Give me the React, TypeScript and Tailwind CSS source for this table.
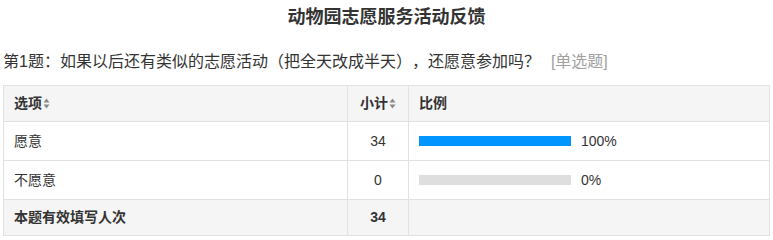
import React from "react";

const font = { fontFamily: '"Liberation Sans", Arial, "Noto Sans CJK SC", sans-serif' };

function SortIcon() {
  return (
    <svg width="7" height="11" viewBox="0 0 7 11" className="ml-[1px] inline-block">
      <polygon points="3.5,0.5 6.5,4.5 0.5,4.5" fill="#8a8a8a" />
      <polygon points="0.5,6.5 6.5,6.5 3.5,10.5" fill="#8a8a8a" />
    </svg>
  );
}

type Row = { label: string; count: number; pct: number };

const rows: Row[] = [
  { label: "愿意", count: 34, pct: 100 },
  { label: "不愿意", count: 0, pct: 0 },
];

function Bar({ pct }: { pct: number }) {
  return (
    <div className="flex items-center pl-[10px]">
      <div className="h-[10px] w-[152px] bg-[#dedede]">
        <div className="h-full bg-[#0095ff]" style={{ width: `${pct}%` }} />
      </div>
      <span className="ml-[10px] text-[14px] text-[#333]">{pct}%</span>
    </div>
  );
}

export default function App() {
  const cell = "border-r border-b border-[#e1e1e1] flex items-center";
  return (
    <div className="w-[773px] h-[240px] bg-white px-[3px] text-[#333]" style={font}>
      <div className="h-[34px] flex items-center justify-center text-[18px] font-bold leading-none">
        动物园志愿服务活动反馈
      </div>
      <div className="mt-[16px] h-[24px] flex items-center text-[16px] leading-none whitespace-nowrap [text-spacing-trim:space-all]">
        <span>第1题：如果以后还有类似的志愿活动（把全天改成半天），还愿意参加吗？</span>
        <span className="ml-[11px] text-[#a0a0a0]">[单选题]</span>
      </div>
      <div className="mt-[11px] w-[767px] grid grid-cols-[344px_61px_361px] border-l border-t border-[#e1e1e1] text-[14px]">
        <div className={`${cell} h-[36px] bg-[#f5f5f5] pl-[10px] font-bold`}>
          选项<SortIcon />
        </div>
        <div className={`${cell} h-[36px] bg-[#f5f5f5] justify-center font-bold`}>
          小计<SortIcon />
        </div>
        <div className={`${cell} h-[36px] bg-[#f5f5f5] pl-[10px] font-bold`}>比例</div>

        {rows.map((r) => (
          <React.Fragment key={r.label}>
            <div className={`${cell} h-[39px] pl-[10px]`}>{r.label}</div>
            <div className={`${cell} h-[39px] justify-center`}>{r.count}</div>
            <div className={`${cell} h-[39px]`}>
              <Bar pct={r.pct} />
            </div>
          </React.Fragment>
        ))}

        <div className={`${cell} h-[36px] bg-[#f5f5f5] pl-[10px] font-bold`}>本题有效填写人次</div>
        <div className={`${cell} h-[36px] bg-[#f5f5f5] justify-center font-bold`}>34</div>
        <div className={`${cell} h-[36px] bg-[#f5f5f5]`} />
      </div>
    </div>
  );
}
